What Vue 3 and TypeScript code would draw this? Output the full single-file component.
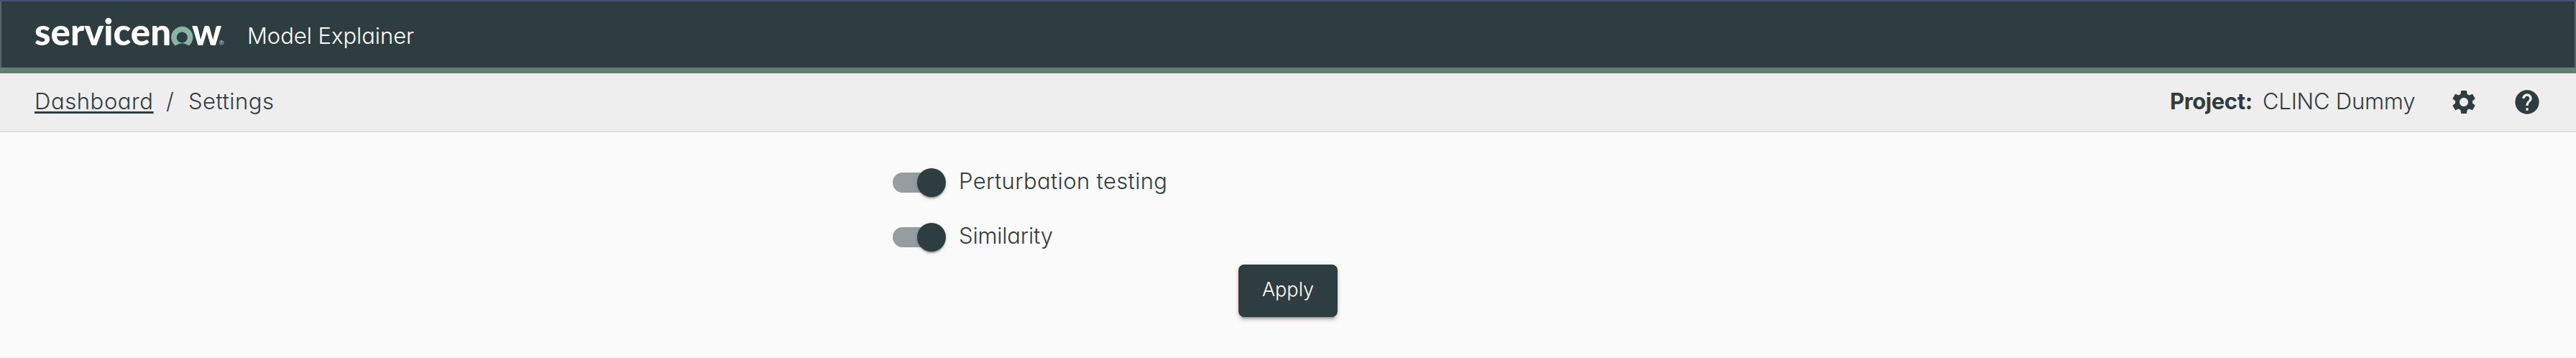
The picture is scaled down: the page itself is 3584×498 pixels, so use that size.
<script setup lang="ts">
import { ref } from 'vue'

interface Option {
  id: string
  label: string
  enabled: boolean
}

const project = 'CLINC Dummy'
const options = ref<Option[]>([
  { id: 'perturbation', label: 'Perturbation testing', enabled: true },
  { id: 'similarity', label: 'Similarity', enabled: true },
])

function toggle(option: Option) {
  option.enabled = !option.enabled
}
</script>

<template>
  <div class="app">
    <header class="banner">
      <svg class="logo" width="268" height="74" viewBox="0 -14 268 74" role="img" aria-label="servicenow">
        <text class="logo-text" x="0" y="45.7">servicen</text>
        <path class="logo-ring" d="M205.3 19.8a15.2 15.2 0 0 0-10.6 26q1 1 2.4.1a15 15 0 0 1 16.4 0q1.4.9 2.4-.1a15.2 15.2 0 0 0-10.6-26zm0 22.8a7.6 7.6 0 1 1 0-15.2 7.6 7.6 0 0 1 0 15.2z" />
        <text class="logo-text" x="219" y="45.7">w</text>
        <circle class="logo-mark" cx="260.3" cy="42.3" r="2.9" />
        <text class="logo-r" x="260.3" y="43.9">R</text>
      </svg>
      <span class="product">Model Explainer</span>
    </header>

    <nav class="bar">
      <div class="crumbs">
        <a class="crumb-link">Dashboard</a>
        <span class="slash">/</span>
        <span class="crumb-current">Settings</span>
      </div>
      <div class="tools">
        <strong class="project-label">Project:</strong>
        <span class="project-name">{{ project }}</span>
        <svg class="icon" viewBox="0 0 24 24">
          <path d="M19.14 12.94c.04-.3.06-.61.06-.94 0-.32-.02-.64-.07-.94l2.03-1.58c.18-.14.23-.41.12-.61l-1.92-3.32c-.12-.22-.37-.29-.59-.22l-2.39.96c-.5-.38-1.03-.7-1.62-.94l-.36-2.54c-.04-.24-.24-.41-.48-.41h-3.84c-.24 0-.43.17-.47.41l-.36 2.54c-.59.24-1.13.57-1.62.94l-2.39-.96c-.22-.08-.47 0-.59.22L2.74 8.87c-.12.21-.08.47.12.61l2.03 1.58c-.05.3-.09.63-.09.94s.02.64.07.94l-2.03 1.58c-.18.14-.23.41-.12.61l1.92 3.32c.12.22.37.29.59.22l2.39-.96c.5.38 1.03.7 1.62.94l.36 2.54c.05.24.24.41.48.41h3.84c.24 0 .44-.17.47-.41l.36-2.54c.59-.24 1.13-.56 1.62-.94l2.39.96c.22.08.47 0 .59-.22l1.92-3.32c.12-.22.07-.47-.12-.61l-2.01-1.58zM12 15.6c-1.98 0-3.6-1.62-3.6-3.6s1.62-3.6 3.6-3.6 3.6 1.62 3.6 3.6-1.62 3.6-3.6 3.6z" />
        </svg>
        <svg class="icon" viewBox="0 0 24 24">
          <path d="M12 2C6.48 2 2 6.48 2 12s4.48 10 10 10 10-4.48 10-10S17.52 2 12 2zm1 17h-2v-2h2v2zm2.07-7.75-.9.92C13.45 12.9 13 13.5 13 15h-2v-.5c0-1.1.45-2.1 1.17-2.83l1.24-1.26c.37-.36.59-.86.59-1.41 0-1.1-.9-2-2-2s-2 .9-2 2H8c0-2.21 1.79-4 4-4s4 1.79 4 4c0 .88-.36 1.68-.93 2.25z" />
        </svg>
      </div>
    </nav>

    <main class="settings">
      <div class="options">
        <div v-for="option in options" :key="option.id" class="option" @click="toggle(option)">
          <span class="switch" :class="{ on: option.enabled }">
            <span class="thumb"></span>
          </span>
          <span class="label" :class="option.id">{{ option.label }}</span>
        </div>
      </div>
      <button class="apply" type="button">Apply</button>
    </main>
  </div>
</template>

<style>
body {
  background: #fafafa;
}
</style>

<style scoped>
.app {
  box-sizing: border-box;
  height: 498px;
  background: #fafafa;
  color: #2e3d40;
  font: 300 31px/40px Inter, "Liberation Sans", sans-serif;
  font-feature-settings: "cv11";
  white-space: nowrap;
}
.banner {
  box-sizing: border-box;
  height: 102px;
  display: flex;
  align-items: flex-start;
  padding: 1px 0 0 48px;
  border-top: 2px solid #43517b;
  border-bottom: 8px solid #637f72;
  background: #2e3d40;
  color: #fff;
  box-shadow: inset 2px 0 #56666a, inset -2px 0 #56666a;
}
.logo {
  flex: none;
}
.logo-text {
  font: 900 51px Lato, sans-serif;
  fill: #fff;
}
.logo-ring {
  fill: #89b5a3;
}
.logo-mark {
  fill: none;
  stroke: #b9c0c1;
  stroke-width: 0.7;
}
.logo-r {
  font: 700 4.5px Inter, sans-serif;
  fill: #b9c0c1;
  text-anchor: middle;
}
.product {
  margin: 27px 0 0 28px;
  letter-spacing: -0.05px;
}
.bar {
  box-sizing: border-box;
  height: 82px;
  display: flex;
  justify-content: space-between;
  align-items: center;
  padding: 0 48px 2px;
  border-bottom: 2px solid #dfdfdf;
  background: #eee;
}
.crumbs,
.tools {
  display: flex;
  align-items: center;
}
.crumb-link {
  width: 165px;
  letter-spacing: 0.6px;
  text-decoration: underline;
  text-decoration-thickness: 3px;
  text-underline-offset: 3px;
  text-decoration-skip-ink: none;
}
.slash {
  width: 14px;
  margin: 0 17px 0 18px;
}
.crumb-current {
  letter-spacing: 0.5px;
}
.project-label {
  width: 115px;
  font-weight: 700;
  letter-spacing: -0.4px;
}
.project-name {
  width: 213px;
  margin: 0 47px 0 14px;
  letter-spacing: -0.2px;
}
.icon {
  width: 40px;
  height: 40px;
  margin-top: 2px;
  fill: #2e3d40;
}
.icon + .icon {
  margin-left: 48px;
}
.settings {
  width: 1100px;
  margin: 0 auto;
  padding-top: 32px;
  display: flex;
  flex-direction: column;
  align-items: center;
}
.options {
  align-self: stretch;
}
.option {
  height: 76px;
  display: flex;
  align-items: center;
  cursor: pointer;
}
.switch {
  flex: none;
  box-sizing: border-box;
  width: 68px;
  height: 28px;
  display: flex;
  align-items: center;
  border-radius: 14px;
  background: #949d9f;
}
.thumb {
  flex: none;
  width: 40px;
  height: 40px;
  margin-left: -6px;
  border-radius: 50%;
  background: #2e3d40;
  box-shadow: 0 4px 2px -2px rgba(0, 0, 0, 0.2), 0 2px 2px rgba(0, 0, 0, 0.14), 0 2px 6px rgba(0, 0, 0, 0.12);
}
.on .thumb {
  margin-left: 34px;
}
.label {
  margin: 0 0 4px 24px;
}
.perturbation {
  letter-spacing: 0.35px;
}
.similarity {
  letter-spacing: -0.2px;
}
.apply {
  width: 138px;
  height: 73px;
  padding: 0 0 3px;
  border: 0;
  border-radius: 8px;
  background: #2e3d40;
  color: #fff;
  font: 300 27px/40px Inter, "Liberation Sans", sans-serif;
  font-feature-settings: inherit;
  box-shadow: 0 6px 2px -4px rgba(0, 0, 0, 0.2), 0 4px 4px rgba(0, 0, 0, 0.14), 0 2px 10px rgba(0, 0, 0, 0.12);
}
</style>
